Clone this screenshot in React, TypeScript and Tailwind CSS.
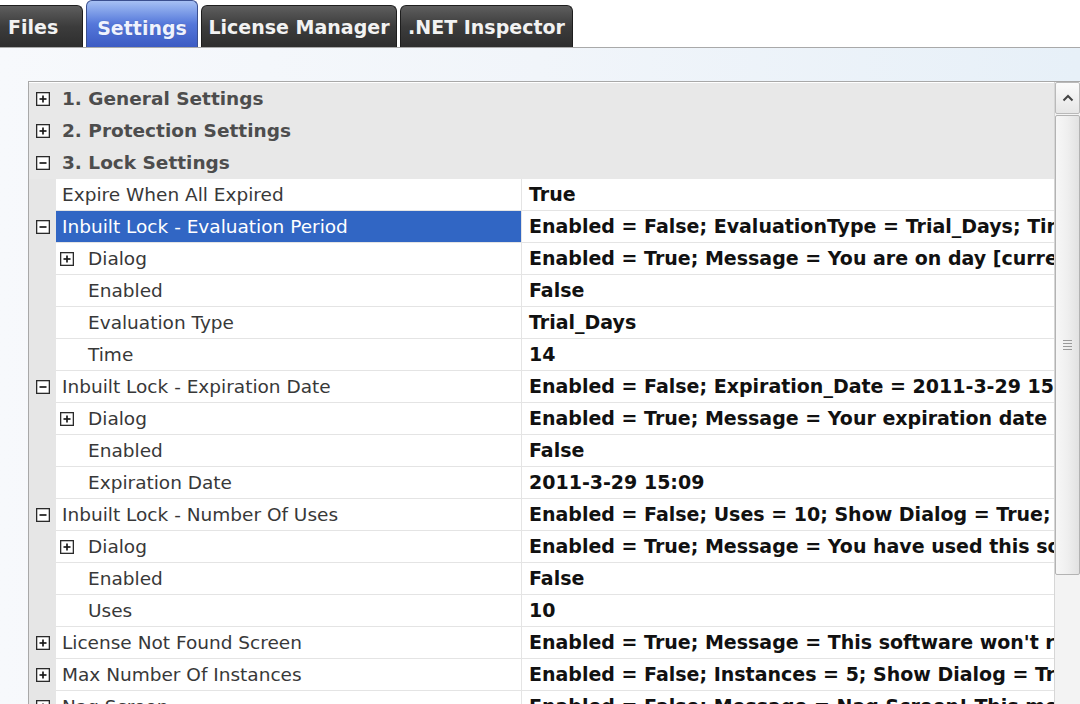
import React from "react";

type Row = {
  kind: "cat" | "row";
  name: string;
  value?: string;
  level?: number;
  box?: "plus" | "minus" | null;
  selected?: boolean;
};

const rows: Row[] = [
  { kind: "cat", name: "1. General Settings", box: "plus" },
  { kind: "cat", name: "2. Protection Settings", box: "plus" },
  { kind: "cat", name: "3. Lock Settings", box: "minus" },
  { kind: "row", name: "Expire When All Expired", value: "True", level: 0 },
  { kind: "row", name: "Inbuilt Lock - Evaluation Period", value: "Enabled = False; EvaluationType = Trial_Days; Time = 14; Dialog", level: 0, box: "minus", selected: true },
  { kind: "row", name: "Dialog", value: "Enabled = True; Message = You are on day [current day] of your trial", level: 1, box: "plus" },
  { kind: "row", name: "Enabled", value: "False", level: 1 },
  { kind: "row", name: "Evaluation Type", value: "Trial_Days", level: 1 },
  { kind: "row", name: "Time", value: "14", level: 1 },
  { kind: "row", name: "Inbuilt Lock - Expiration Date", value: "Enabled = False; Expiration_Date = 2011-3-29 15:09; Dialog", level: 0, box: "minus" },
  { kind: "row", name: "Dialog", value: "Enabled = True; Message = Your expiration date is [expiration date]", level: 1, box: "plus" },
  { kind: "row", name: "Enabled", value: "False", level: 1 },
  { kind: "row", name: "Expiration Date", value: "2011-3-29 15:09", level: 1 },
  { kind: "row", name: "Inbuilt Lock - Number Of Uses", value: "Enabled = False; Uses = 10; Show Dialog = True; Message", level: 0, box: "minus" },
  { kind: "row", name: "Dialog", value: "Enabled = True; Message = You have used this software [used] times", level: 1, box: "plus" },
  { kind: "row", name: "Enabled", value: "False", level: 1 },
  { kind: "row", name: "Uses", value: "10", level: 1 },
  { kind: "row", name: "License Not Found Screen", value: "Enabled = True; Message = This software won't run without a license", level: 0, box: "plus" },
  { kind: "row", name: "Max Number Of Instances", value: "Enabled = False; Instances = 5; Show Dialog = True; Message", level: 0, box: "plus" },
  { kind: "row", name: "Nag Screen", value: "Enabled = False; Message = Nag Screen! This message is shown", level: 0, box: "plus" },
];

function Box({ type }: { type: "plus" | "minus" }) {
  return (
    <svg width="14" height="14" viewBox="0 0 14 14" className="shrink-0">
      <rect x="0.6" y="0.6" width="12.8" height="12.8" fill="#fff" stroke="#2a2a2a" strokeWidth="1.4" />
      <line x1="3.5" y1="7" x2="10.5" y2="7" stroke="#1a1a1a" strokeWidth="1.7" />
      {type === "plus" && <line x1="7" y1="3.5" x2="7" y2="10.5" stroke="#1a1a1a" strokeWidth="1.7" />}
    </svg>
  );
}

function Tab({ label, active, className }: { label: string; active?: boolean; className?: string }) {
  if (active) {
    return (
      <div
        className={
          "h-[47px] flex items-center justify-center pt-[8px] rounded-t-[6px] border border-[#3a4f8f] border-b-0 bg-gradient-to-b from-[#a6c0f3] via-[#5577da] to-[#3c5bc3] text-[#eef2ff] font-bold text-[19px] " +
          (className ?? "")
        }
        style={{ textShadow: "0 0 1px rgba(0,0,0,0.3)" }}
      >
        {label}
      </div>
    );
  }
  return (
    <div
      className={
        "h-[42px] flex items-center justify-center pt-[2px] rounded-t-[6px] border border-[#1e1e1e] border-b-0 bg-gradient-to-b from-[#5e5e5e] via-[#3c3c3c] to-[#2e2e2e] text-[#f2f2f2] font-bold text-[19px] " +
        (className ?? "")
      }
    >
      {label}
    </div>
  );
}

export default function App() {
  return (
    <div
      className="w-[1080px] h-[704px] overflow-hidden bg-white flex flex-col"
      style={{ fontFamily: '"DejaVu Sans", Verdana, sans-serif' }}
    >
      {/* Tab bar */}
      <div className="h-[48px] shrink-0 flex items-end gap-[3px] bg-white border-b border-[#a9a9a9]">
        <Tab label="Files" className="w-[90px] ml-[-7px] justify-start pl-[14px] rounded-tl-none" />
        <Tab label="Settings" active className="w-[112px]" />
        <Tab label="License Manager" className="w-[196px]" />
        <Tab label=".NET Inspector" className="w-[173px]" />
      </div>

      {/* Content */}
      <div className="flex-1 min-h-0 bg-gradient-to-r from-[#f7f9fc] via-[#f1f5fa] to-[#e7f0f8] pt-[33px] pl-[28px] flex flex-col">
        <div className="flex-1 min-h-0 flex border-t border-l border-[#a8a8a8] bg-white overflow-hidden">
          {/* Grid */}
          <div className="flex-1 min-w-0 flex flex-col pt-[1px]">
            {rows.map((r, i) => {
              if (r.kind === "cat") {
                return (
                  <div key={i} className="h-[32px] shrink-0 flex items-center bg-[#e8e8e8]">
                    <div className="w-[27px] flex justify-center pl-[1px]">
                      <Box type={r.box as "plus" | "minus"} />
                    </div>
                    <span className="pl-[6px] font-bold text-[18.5px] text-[#4d4d4d] whitespace-nowrap">{r.name}</span>
                  </div>
                );
              }
              const lvl = r.level ?? 0;
              return (
                <div key={i} className="h-[32px] shrink-0 flex bg-white">
                  <div className="w-[27px] shrink-0 bg-[#e6e6e6] flex items-center justify-center pl-[1px]">
                    {lvl === 0 && r.box && <Box type={r.box} />}
                  </div>
                  <div
                    className={
                      "w-[466px] shrink-0 flex items-center border-b border-r border-[#e4e4e4] " +
                      (r.selected ? "bg-[#3166c4] text-white" : "text-[#383838]")
                    }
                  >
                    {lvl === 1 ? (
                      <div className="flex items-center">
                        <div className="w-[32px] flex items-center pl-[4px]">
                          {r.box && <Box type={r.box} />}
                        </div>
                        <span className="text-[18.5px] whitespace-nowrap">{r.name}</span>
                      </div>
                    ) : (
                      <span className="pl-[6px] text-[18.5px] whitespace-nowrap">{r.name}</span>
                    )}
                  </div>
                  <div className="flex-1 min-w-0 overflow-hidden flex items-center border-b border-[#e4e4e4] pl-[7px]">
                    <span className="font-bold text-[19px] text-[#111] whitespace-nowrap">{r.value}</span>
                  </div>
                </div>
              );
            })}
          </div>

          {/* Scrollbar */}
          <div className="w-[26px] shrink-0 flex flex-col border-l border-[#d6d6d6] bg-[#f4f4f4]">
            <div className="h-[32px] shrink-0 flex items-center justify-center border border-[#b9b9b9] rounded-[2px] bg-gradient-to-b from-[#fbfbfb] to-[#e6e6e6]">
              <svg width="12" height="8" viewBox="0 0 12 8">
                <path d="M1.5 6.5 L6 2 L10.5 6.5" fill="none" stroke="#444" strokeWidth="2" />
              </svg>
            </div>
            <div className="h-[460px] shrink-0 mt-[1px] flex items-center justify-center border border-[#b3b3b3] rounded-[2px] bg-gradient-to-r from-[#f7f7f7] via-[#efefef] to-[#e2e2e2]">
              <div className="flex flex-col gap-[2px]">
                <div className="w-[9px] h-[1px] bg-[#9a9a9a]" />
                <div className="w-[9px] h-[1px] bg-[#9a9a9a]" />
                <div className="w-[9px] h-[1px] bg-[#9a9a9a]" />
                <div className="w-[9px] h-[1px] bg-[#9a9a9a]" />
              </div>
            </div>
            <div className="flex-1 bg-[#f3f3f3]" />
          </div>
        </div>
      </div>
    </div>
  );
}
